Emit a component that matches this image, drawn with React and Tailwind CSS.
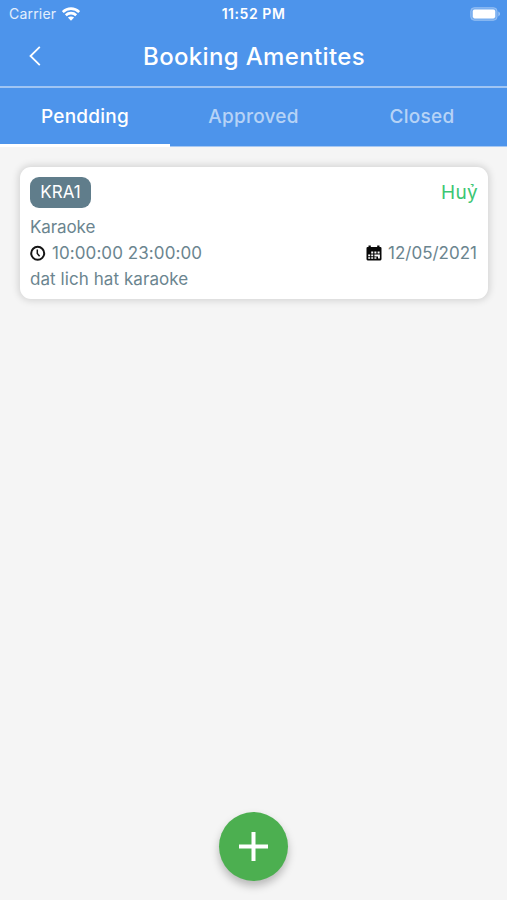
import React, { useState } from 'react';

const tabs = ['Pendding', 'Approved', 'Closed'];

const bookings = [
    {
        code: 'KRA1',
        name: 'Karaoke',
        time: '10:00:00 23:00:00',
        date: '12/05/2021',
        note: 'dat lich hat karaoke',
    },
];

const WifiIcon = () => (
    <svg width="18" height="14" viewBox="0 0 18 14" fill="none" stroke="white" strokeWidth="2.7">
        <path d="M0.8 5C5.5 0.5 12.5 0.5 17.2 5" />
        <path d="M3.8 8.3C6.8 5.5 11.2 5.5 14.2 8.3" />
        <path d="M9 13.8L5.9 10.6C7.7 9.1 10.3 9.1 12.1 10.6Z" fill="white" stroke="none" />
    </svg>
);

const BatteryIcon = () => (
    <svg width="31" height="14" viewBox="0 0 31 14">
        <rect x="0.6" y="0.6" width="26.6" height="12.8" rx="3.8" fill="white" fillOpacity="0.25" stroke="white" strokeOpacity="0.25" />
        <rect x="2.8" y="2.6" width="22.4" height="8.8" rx="1.8" fill="white" />
        <path d="M28.3 4.6C30.6 5.6 30.6 8.4 28.3 9.4Z" fill="white" fillOpacity="0.45" />
    </svg>
);

const ClockIcon = () => (
    <svg width="16" height="16" viewBox="0 0 16 16" fill="none" stroke="#151515">
        <circle cx="7.7" cy="8.3" r="6.5" strokeWidth="2" />
        <path d="M7.3 4.5V8.5L9.6 11.2" strokeWidth="1.5" />
    </svg>
);

const CalendarIcon = () => (
    <svg width="16" height="16" viewBox="0 0 16 16">
        <path d="M2.5 0.5H4.8V2H11.2V0.5H13.5V2H14.3Q15.5 2 15.5 3.2V14Q15.5 15.4 14.3 15.4H1.7Q0.5 15.4 0.5 14V3.2Q0.5 2 1.7 2H2.5Z" fill="#080808" />
        <path d="M5.2 6.4H7.2V8.4H5.2ZM8.4 6.4H10.4V8.4H8.4ZM11.6 6.4H13.6V8.4H11.6ZM2.2 9.4H4.2V11.2H2.2ZM5.2 9.4H7.2V11.2H5.2ZM8.4 9.4H13.9V13.4H12V11.4H8.4ZM2.2 12.2H4.2V13.8H2.2ZM5.2 12.2H7.2V13.8H5.2ZM8.4 12.2H10.4V13.8H8.4Z" fill="white" />
    </svg>
);

const StatusBar = () => (
    <div className="grid h-[27px] grid-cols-3 items-center pl-[9px] pr-[6px] text-[14px]">
        <div className="flex items-center gap-[6px]">
            <span className="tracking-[0.2px] text-white/85">Carrier</span>
            <WifiIcon />
        </div>
        <span className="-ml-[3px] whitespace-nowrap text-center text-[14px] font-semibold tracking-[0.55px]">11:52 PM</span>
        <div className="flex justify-end">
            <BatteryIcon />
        </div>
    </div>
);

const BookingCard = ({ booking }) => (
    <div className="h-[132px] rounded-[11px] bg-white px-[10px] pt-[10px] text-[17px] text-[#6b858f] shadow-[0_0_7px_2px_rgba(0,0,0,0.13)]">
        <div className="flex items-center justify-between">
            <span className="flex h-[31px] w-[61px] items-center justify-center rounded-[9px] bg-[#607d8b] text-white">
                {booking.code}
            </span>
            <button className="text-[19px] leading-none tracking-[0.3px] text-[#3bc673]">Huỷ</button>
        </div>
        <p className="mt-[6px] leading-[26px] tracking-[-0.1px]">{booking.name}</p>
        <div className="flex justify-between leading-[26px]">
            <div className="flex items-center gap-[6px]">
                <ClockIcon />
                <span className="tracking-[0.08px]">{booking.time}</span>
            </div>
            <div className="mr-px flex items-center gap-[6px]">
                <CalendarIcon />
                <span>{booking.date}</span>
            </div>
        </div>
        <p className="leading-[26px] tracking-[0.07px]">{booking.note}</p>
    </div>
);

const App = () => {
    const [active, setActive] = useState(0);

    return (
        <div className="flex h-[900px] w-full flex-col overflow-hidden bg-[#f5f5f5] font-['Inter',sans-serif]">
            <header className="bg-[#4d94eb] text-white">
                <StatusBar />
                <div className="grid h-[59px] grid-cols-[70px_1fr_69px] items-center pb-px">
                    <button className="flex justify-center" aria-label="Back">
                        <svg width="12" height="20" viewBox="0 0 12 20" fill="none" stroke="white" strokeWidth="1.8">
                            <path d="M10.8 0.8L1.5 10L10.8 19.2" />
                        </svg>
                    </button>
                    <h1 className="whitespace-nowrap pt-px text-center text-[24px] font-medium tracking-[0.35px]">Booking Amentites</h1>
                </div>
                <div className="h-[2px] bg-[#a0c5f3]" />
                <nav className="grid h-[59px] grid-cols-[170px_167px_170px] border-b border-[#a6c8f3]">
                    {tabs.map((tab, i) => (
                        <button
                            key={tab}
                            onClick={() => setActive(i)}
                            className={`-mb-px border-b-[3px] pt-[2px] text-[19px] font-medium tracking-[0.25px] ${
                                active === i ? 'border-white text-white' : 'border-transparent text-white/60'
                            }`}
                        >
                            {tab}
                        </button>
                    ))}
                </nav>
            </header>

            <main className="flex-1 pl-5 pr-[19px] pt-5">
                {bookings.map((booking) => (
                    <BookingCard key={booking.code} booking={booking} />
                ))}
            </main>

            <footer className="flex justify-center pb-[19px]">
                <button
                    aria-label="Add booking"
                    className="flex size-[69px] items-center justify-center rounded-full bg-[#4caf50] shadow-[0_5px_8px_rgba(0,0,0,0.25)]"
                >
                    <svg width="29" height="29" viewBox="0 0 29 29" stroke="white" strokeWidth="4">
                        <path d="M14.5 0V29M0 14.5H29" />
                    </svg>
                </button>
            </footer>
        </div>
    );
};

export default App;
